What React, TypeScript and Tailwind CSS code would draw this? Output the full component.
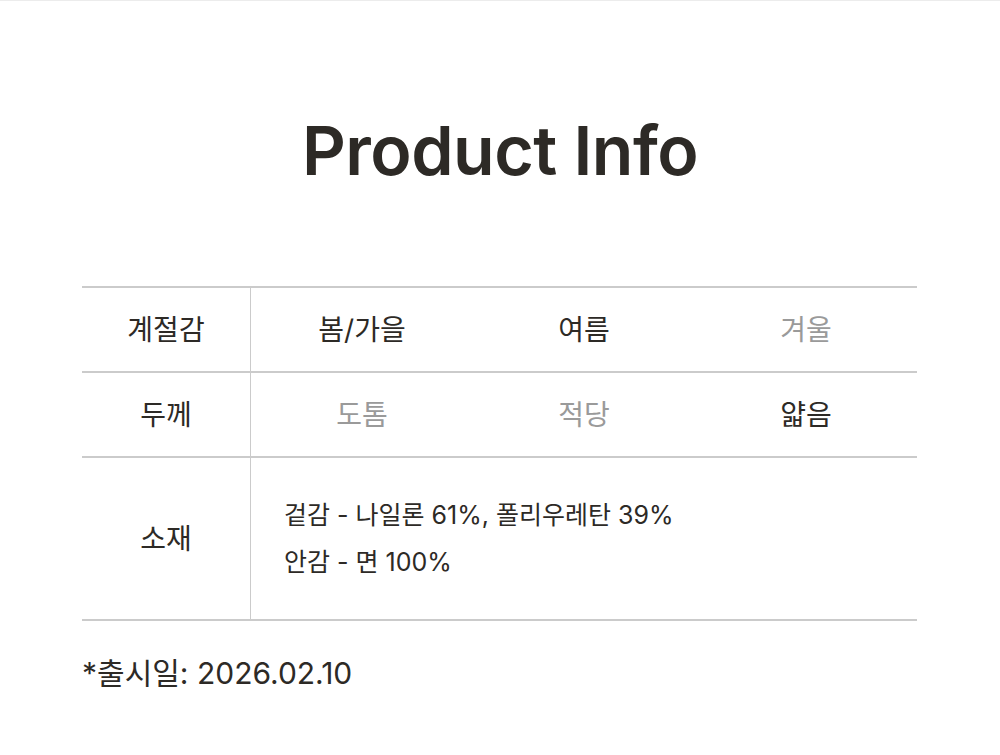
const FONT = "font-['Inter','Noto_Sans_CJK_KR',sans-serif]";

type Opt = { label: string; on: boolean };

const rows: { title: string; opts: Opt[] }[] = [
  {
    title: '계절감',
    opts: [
      { label: '봄/가을', on: true },
      { label: '여름', on: true },
      { label: '겨울', on: false },
    ],
  },
  {
    title: '두께',
    opts: [
      { label: '도톰', on: false },
      { label: '적당', on: false },
      { label: '얇음', on: true },
    ],
  },
];

export default function App() {
  return (
    <div className={`${FONT} min-h-[755px] w-[1000px] bg-white text-[#2d2a26] border-t border-[#ececec]`}>
      <h1 className="pt-[104px] text-center text-[68px] font-semibold leading-[90px] tracking-[-0.5px]">
        Product Info
      </h1>

      <div className="ml-[82px] mr-[83px] mt-[91px] border-t-2 border-[#cbcbcb]">
        {rows.map((row) => (
          <div key={row.title} className="flex h-[85px] border-b-2 border-[#cbcbcb]">
            <div className="flex w-[169px] shrink-0 items-center justify-center border-r border-[#cbcbcb] text-[28px]">
              {row.title}
            </div>
            <div className="grid flex-1 grid-cols-3">
              {row.opts.map((o) => (
                <div
                  key={o.label}
                  className={`flex items-center justify-center text-[28px] ${
                    o.on ? 'text-[#2d2a26]' : 'text-[#9a9a9a]'
                  }`}
                >
                  {o.label}
                </div>
              ))}
            </div>
          </div>
        ))}

        <div className="flex h-[163px] border-b-2 border-[#cbcbcb]">
          <div className="flex w-[169px] shrink-0 items-center justify-center border-r border-[#cbcbcb] text-[28px]">
            소재
          </div>
          <div className="flex flex-1 flex-col justify-center gap-[2px] pl-[33px] text-[25px] leading-[45px]">
            <p>겉감 - 나일론 61%, 폴리우레탄 39%</p>
            <p>안감 - 면 100%</p>
          </div>
        </div>

        <p className="mt-[30px] text-[30px] leading-[44px]">*출시일: 2026.02.10</p>
      </div>
    </div>
  );
}
